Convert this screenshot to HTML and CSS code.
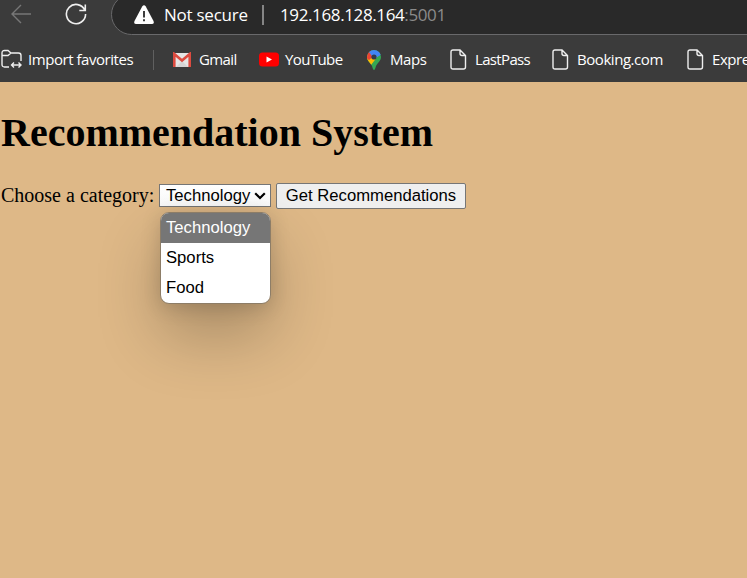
FILE: index.html
```html
<!DOCTYPE html>
<html lang="en">
<head>
<meta charset="utf-8">
<title>Recommendation System</title>
<link rel="stylesheet" href="styles.css">
</head>
<body>
<header class="chrome">
  <div class="toolbar">
    <svg class="back" width="22" height="20" viewBox="0 0 22 20"><path d="M21 10H2M11 1L2 10l9 9"/></svg>
    <svg class="reload" width="22" height="22" viewBox="0 0 22 22"><path d="M19.8 7.2A9.6 9.6 0 1 0 20.6 11M20.3 1.5v6h-6"/></svg>
    <div class="address">
      <svg class="warning" width="22" height="20" viewBox="0 0 22 20"><path d="M9.2 1.5q1.8-2.4 3.6 0L20.5 16q1 3-1.6 3H3.1Q.5 19 1.5 16z" fill="#fff"/><path d="M11 6v6.5M11 14.3v2" stroke="#292929" stroke-width="1.8"/></svg>
      <span class="security">Not secure</span>
      <span class="separator"></span>
      <span class="url">192.168.128.164<span class="port">:5001</span></span>
    </div>
  </div>
  <nav class="bookmarks">
    <a class="bookmark">
      <svg class="line" width="22" height="22" viewBox="0 0 22 22"><path d="M8 18H3.5Q1 18 1 15.500V4Q1 1.500 3.500 1.500H7L10 4H17.500Q20 4 20 6.500V12M1 6.500H7L10 4M10.500 16H20M13 13.500L10.500 16l2.500 2.500M17.500 13.500L20 16l-2.500 2.500"/></svg>
      <span class="name import">Import favorites</span>
    </a>
    <span class="divider"></span>
    <a class="bookmark">
      <svg width="20" height="16" viewBox="0 0 20 16"><path d="M1 1h18v14H1z" fill="#e5e5e5"/><path d="M4 15l6-6 6 6" fill="#d5d5d5"/><path d="M2.300 15V2l7.700 6.500L17.700 2v13" fill="none" stroke="#dc4b40" stroke-width="2.600"/></svg>
      <span class="name gmail">Gmail</span>
    </a>
    <a class="bookmark">
      <svg width="20" height="15" viewBox="0 0 20 15"><rect y=".5" width="20" height="14" rx="3.500" fill="#f00"/><path d="M7.500 4.500v6l5.500-3z" fill="#fff"/></svg>
      <span class="name youtube">YouTube</span>
    </a>
    <a class="bookmark">
      <svg width="16" height="20" viewBox="0 0 16 20"><defs><clipPath id="pin"><path d="M8 0a7 7 0 0 1 7 7c0 4-3 5-5 9q-1 4-2 4t-2-4C4 12 1 11 1 7a7 7 0 0 1 7-7z"/></clipPath></defs><g clip-path="url(#pin)"><path fill="#34a853" d="M0 0h16v20H0z"/><path fill="#fbbc04" d="M0 14V5l8 2 4-1-7 9z"/><path fill="#ea4335" d="M0 0h5l3 6-5 4-3-2z"/><path fill="#4285f4" d="M3 2L6-1h10v5L8 9z"/></g><circle cx="8" cy="7" r="2.600" fill="#303b4e"/></svg>
      <span class="name maps">Maps</span>
    </a>
    <a class="bookmark">
      <svg class="line" width="17" height="21" viewBox="0 0 17 21"><path d="M3 1h7l5.500 5.500V18q0 2-2 2H3q-2 0-2-2V3q0-2 2-2zM10 1v3.500q0 2 2 2h3.500"/></svg>
      <span class="name lastpass">LastPass</span>
    </a>
    <a class="bookmark">
      <svg class="line" width="17" height="21" viewBox="0 0 17 21"><path d="M3 1h7l5.500 5.500V18q0 2-2 2H3q-2 0-2-2V3q0-2 2-2zM10 1v3.500q0 2 2 2h3.500"/></svg>
      <span class="name booking">Booking.com</span>
    </a>
    <a class="bookmark">
      <svg class="line" width="17" height="21" viewBox="0 0 17 21"><path d="M3 1h7l5.500 5.500V18q0 2-2 2H3q-2 0-2-2V3q0-2 2-2zM10 1v3.500q0 2 2 2h3.500"/></svg>
      <span class="name express">Expre</span>
    </a>
  </nav>
</header>
<main class="page">
  <h1>Recommendation System</h1>
  <div class="form">
    <span class="prompt">Choose a category:</span>
    <div class="picker">
      <div class="select"><span>Technology</span><svg width="12" height="8" viewBox="0 0 12 8"><path d="M1.200 1.200L6 6l4.800-4.800"/></svg></div>
      <div class="menu">
        <div class="option selected">Technology</div>
        <div class="option">Sports</div>
        <div class="option">Food</div>
      </div>
    </div>
    <button class="submit">Get Recommendations</button>
  </div>
</main>
</body>
</html>
```
FILE: styles.css
```css
* { box-sizing: border-box; }
body {
  margin: 0;
  width: 747px;
  height: 578px;
  overflow: hidden;
  background: #deb887;
  font-family: "Liberation Serif", serif;
}
svg { display: block; flex: none; }
.chrome {
  height: 82px;
  overflow: hidden;
  background: #3b3b3b;
  color: #fff;
  font-family: "Open Sans", "Noto Sans", sans-serif;
}
.toolbar { display: flex; height: 35px; }
.back, .reload {
  fill: none;
  stroke: #eee;
  stroke-width: 1.6;
}
.back { margin: 4px 0 0 10px; stroke: #777; stroke-width: 1.4; }
.reload { margin: 3px 0 0 33px; }
.address {
  display: flex;
  align-items: center;
  width: 660px;
  height: 41px;
  margin: -6px 0 0 24px;
  padding: 0 0 0 21px;
  flex: none;
  border: 1px solid #69696b;
  border-radius: 21px;
  background: #292929;
  font-size: 17px;
  white-space: nowrap;
}
.security { width: 84px; margin-left: 9px; letter-spacing: -0.25px; }
.separator { width: 2px; height: 20px; margin: 0 16px 0 14px; background: #858585; }
.url { letter-spacing: -0.38px; }
.port { color: #8b8b8b; }
.bookmarks {
  display: grid;
  grid-template-columns: 152px 19px 87px 107px 84px 102px 135px 60px;
  align-items: center;
  height: 47px;
  padding: 2px 0 0 1px;
  font-size: 15px;
  letter-spacing: -0.45px;
}
.bookmark { display: flex; align-items: center; gap: 8px; white-space: nowrap; }
.line { fill: none; stroke: #eee; stroke-width: 1.4; }
.name { margin-top: -2px; line-height: 22px; }
.import { margin-left: -3px; }
.gmail { margin-left: -1px; letter-spacing: -0.6px; }
.youtube { margin-left: -2px; letter-spacing: -0.6px; }
.lastpass { letter-spacing: -0.65px; }
.divider { width: 1px; height: 20px; background: #606060; }
.page { padding: 0 1px; color: #000; }
h1 {
  margin: 0;
  padding-top: 28px;
  font-size: 40px;
  line-height: 46px;
}
.form {
  display: flex;
  align-items: flex-start;
  height: 26px;
  margin-top: 27px;
}
.prompt { width: 158px; font-size: 20px; line-height: 24px; }
.picker {
  position: relative;
  width: 112px;
  margin-top: 1px;
  font: 16.667px/20px "Liberation Sans", sans-serif;
}
.select {
  display: flex;
  align-items: center;
  justify-content: space-between;
  height: 23px;
  padding: 0 4px 0 6px;
  border: 1px solid #767676;
  background: linear-gradient(#fff, #fafafa);
}
.select span { margin-top: 1px; }
.select svg { fill: none; stroke: #000; stroke-width: 2.2; }
.menu {
  position: absolute;
  top: 28px;
  left: 1px;
  width: 111px;
  height: 92px;
  overflow: hidden;
  border: 1px solid #8d7d67;
  border-radius: 9px;
  background: #fff;
  box-shadow: 0 32px 64px rgba(0, 0, 0, 0.24), 0 3px 20px rgba(0, 0, 0, 0.16);
}
.option { height: 30px; padding-left: 5px; line-height: 29px; }
.selected { background: #767676; color: #fff; }
.submit {
  width: 190px;
  height: 26px;
  margin-left: 5px;
  padding: 0;
  border: 1px solid #767676;
  border-radius: 2px;
  background: #efefef;
  color: #000;
  font: 16.667px "Liberation Sans", sans-serif;
}
```
